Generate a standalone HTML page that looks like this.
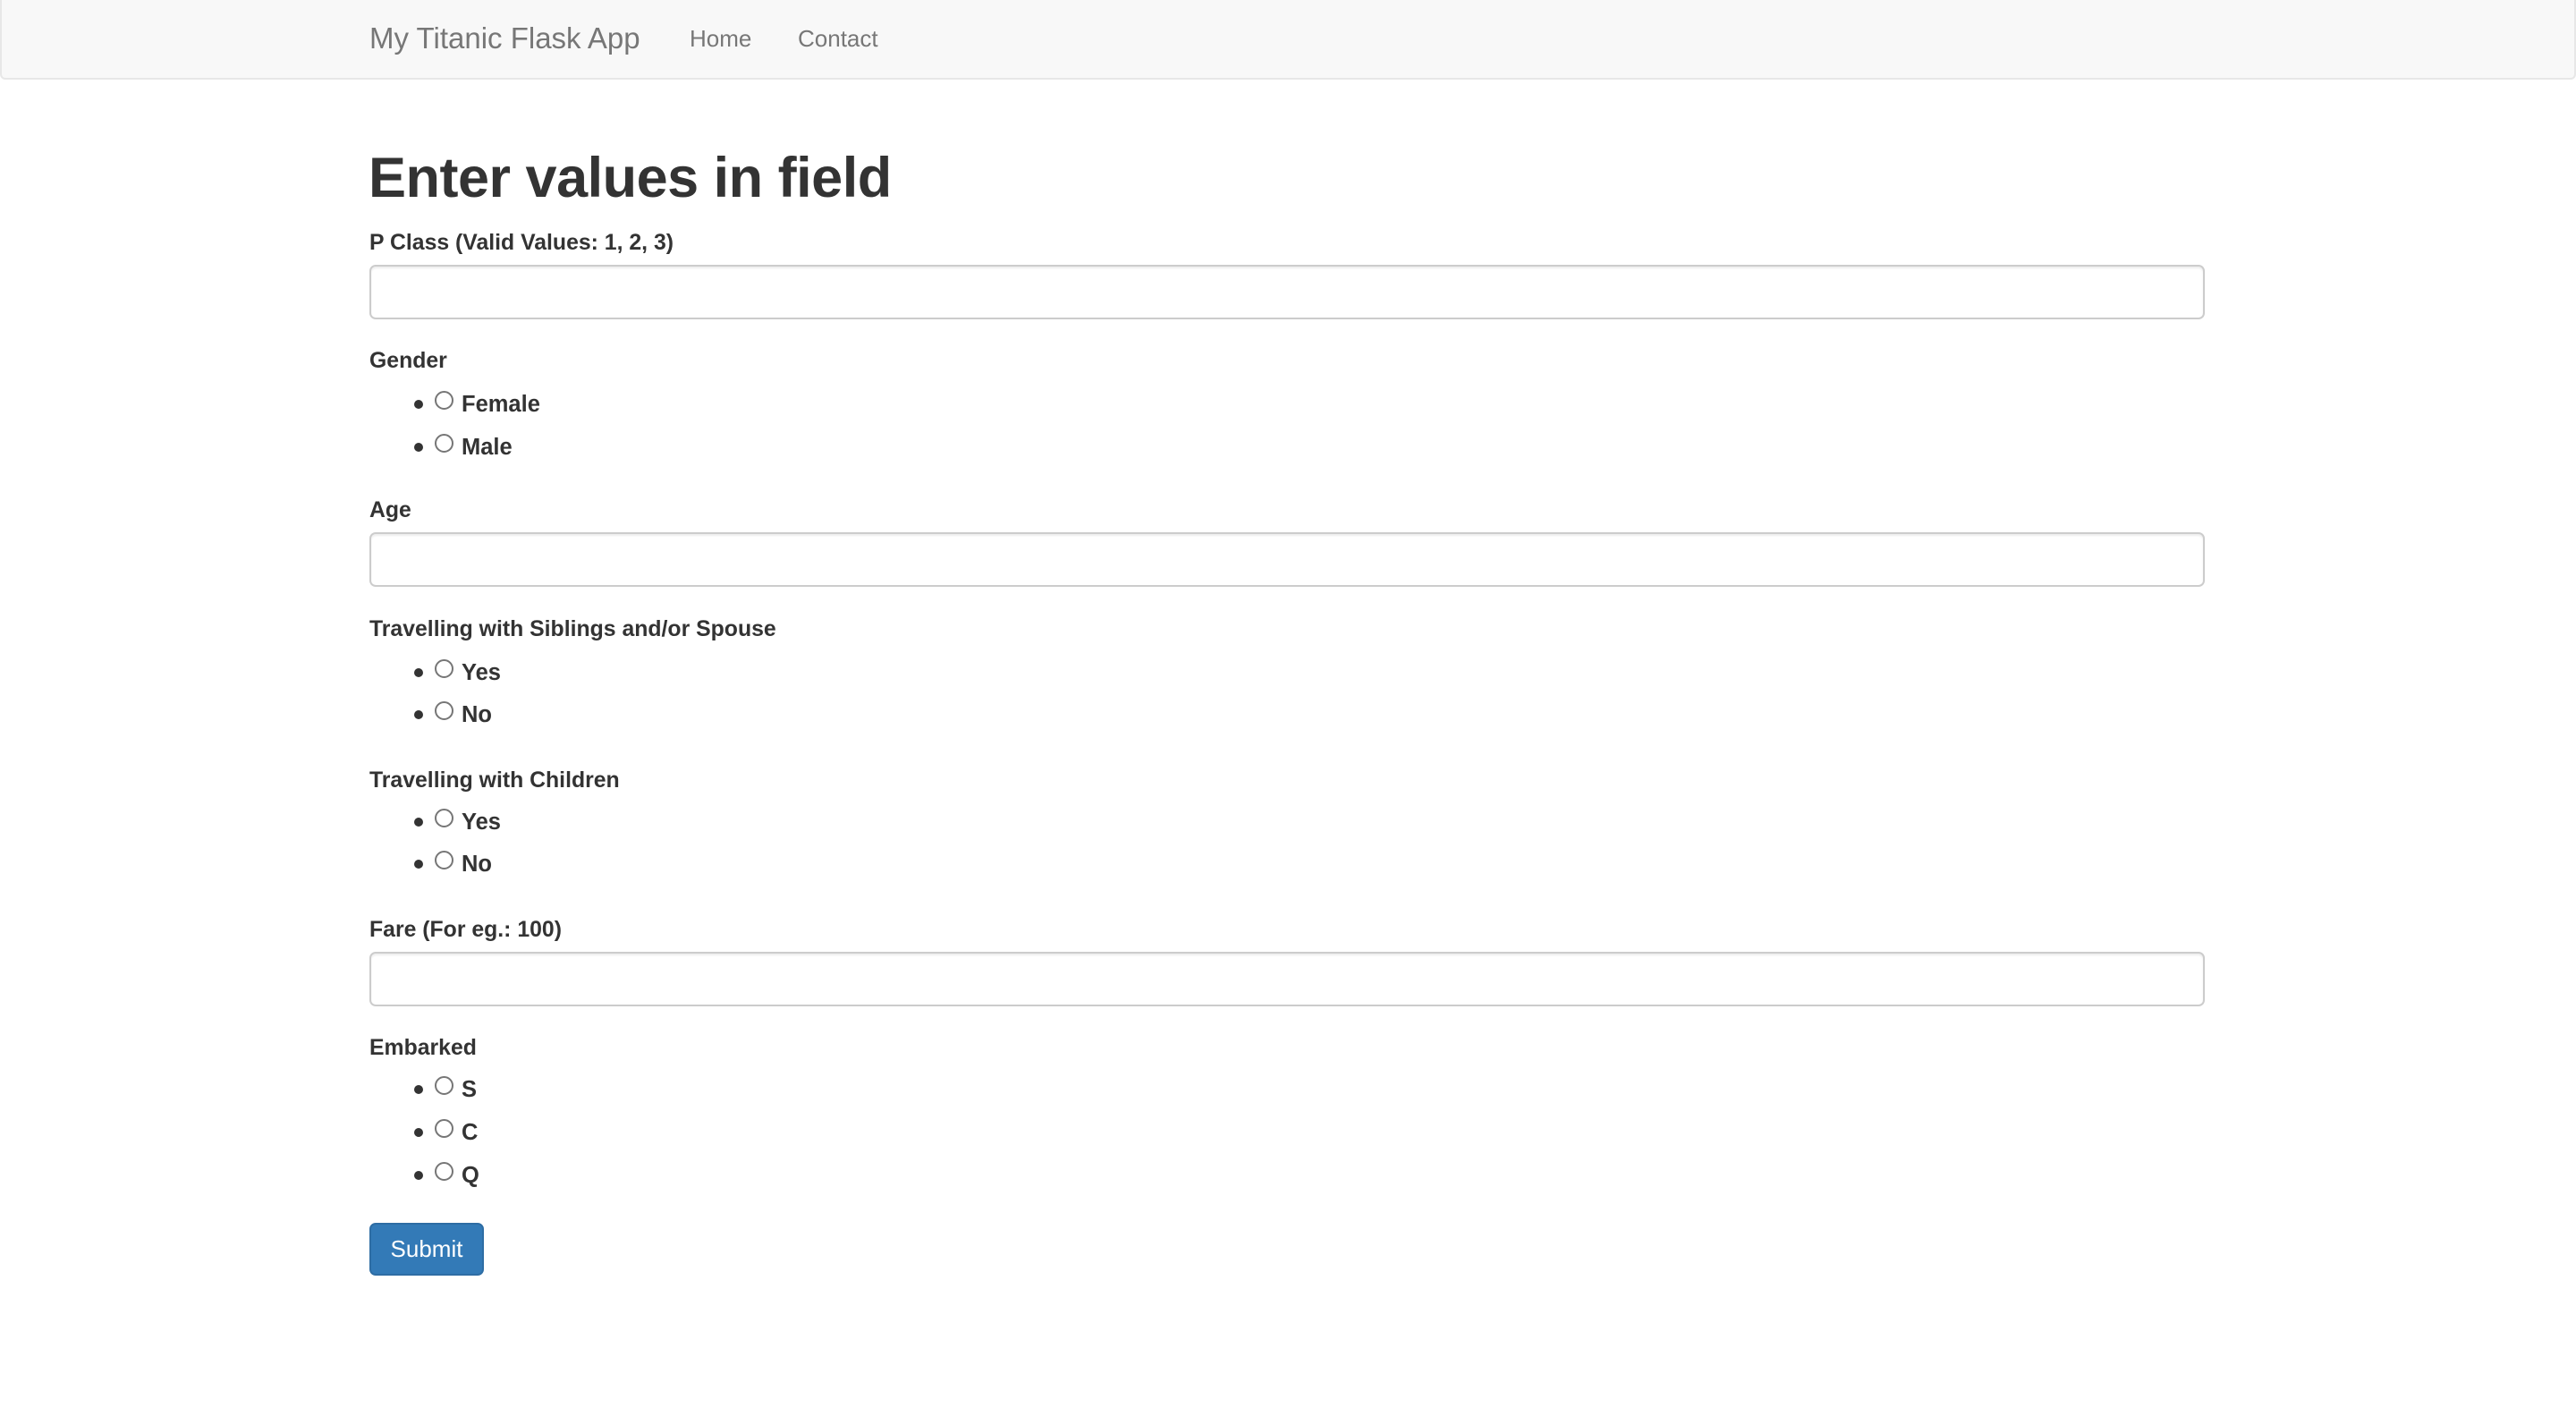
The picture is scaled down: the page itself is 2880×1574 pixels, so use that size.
<!DOCTYPE html>
<html><head><meta charset="utf-8"><style>
*{box-sizing:border-box;margin:0;padding:0}
html,body{width:2880px;height:1574px;background:#fff;overflow:hidden;font-family:"Liberation Sans",Arial,sans-serif;color:#333}
.nav{position:absolute;left:0;top:0;width:2880px;height:89px;background:#f8f8f8;border:2px solid #e7e7e7;border-top:0;border-radius:0 0 6px 6px}
.t{position:absolute;height:40px;line-height:40px;white-space:nowrap}
.brand{font-size:33px;color:#777}
.nl{font-size:26px;color:#777}
h1{position:absolute;left:412px;top:159px;font-size:63px;font-weight:bold;line-height:80px;color:#333;letter-spacing:-0.5px}
.lb{font-size:24.8px;font-weight:bold;left:413px}
.inp{position:absolute;left:413px;width:2052px;height:61px;border:2px solid #ccc;border-radius:7px;background:#fff;box-shadow:inset 0 2px 2px rgba(0,0,0,.075)}
.dot{position:absolute;left:463px;width:10px;height:10px;border-radius:50%;background:#333}
.rad{position:absolute;left:486px;width:21px;height:21px;border-radius:50%;border:2px solid #767676;background:#fff}
.ot{font-size:25.5px;font-weight:bold;left:516px}
.btn{position:absolute;left:413px;top:1367px;width:128px;height:59px;background:#337ab7;border:2px solid #2e6da4;border-radius:7px;color:#fff;font-size:26px;text-align:center;line-height:55px}
</style></head><body>
<div class="nav"></div>
<div class="t brand" style="left:413px;top:23px">My Titanic Flask App</div>
<div class="t nl" style="left:771px;top:23px">Home</div>
<div class="t nl" style="left:892px;top:23px">Contact</div>
<h1>Enter values in field</h1>

<div class="t lb" style="top:252px">P Class (Valid Values: 1, 2, 3)</div>
<div class="inp" style="top:296px"></div>

<div class="t lb" style="top:384px">Gender</div>
<div class="dot" style="top:447px"></div><div class="rad" style="top:437px"></div><div class="t ot" style="top:432px">Female</div>
<div class="dot" style="top:495px"></div><div class="rad" style="top:485px"></div><div class="t ot" style="top:480px">Male</div>

<div class="t lb" style="top:551px">Age</div>
<div class="inp" style="top:595px"></div>

<div class="t lb" style="top:684px">Travelling with Siblings and/or Spouse</div>
<div class="dot" style="top:747px"></div><div class="rad" style="top:737px"></div><div class="t ot" style="top:732px">Yes</div>
<div class="dot" style="top:794px"></div><div class="rad" style="top:784px"></div><div class="t ot" style="top:779px">No</div>

<div class="t lb" style="top:853px">Travelling with Children</div>
<div class="dot" style="top:914px"></div><div class="rad" style="top:904px"></div><div class="t ot" style="top:899px">Yes</div>
<div class="dot" style="top:961px"></div><div class="rad" style="top:951px"></div><div class="t ot" style="top:946px">No</div>

<div class="t lb" style="top:1020px">Fare (For eg.: 100)</div>
<div class="inp" style="top:1064px"></div>

<div class="t lb" style="top:1152px">Embarked</div>
<div class="dot" style="top:1213px"></div><div class="rad" style="top:1203px"></div><div class="t ot" style="top:1198px">S</div>
<div class="dot" style="top:1261px"></div><div class="rad" style="top:1251px"></div><div class="t ot" style="top:1246px">C</div>
<div class="dot" style="top:1309px"></div><div class="rad" style="top:1299px"></div><div class="t ot" style="top:1294px">Q</div>

<div class="btn">Submit</div>
</body></html>
